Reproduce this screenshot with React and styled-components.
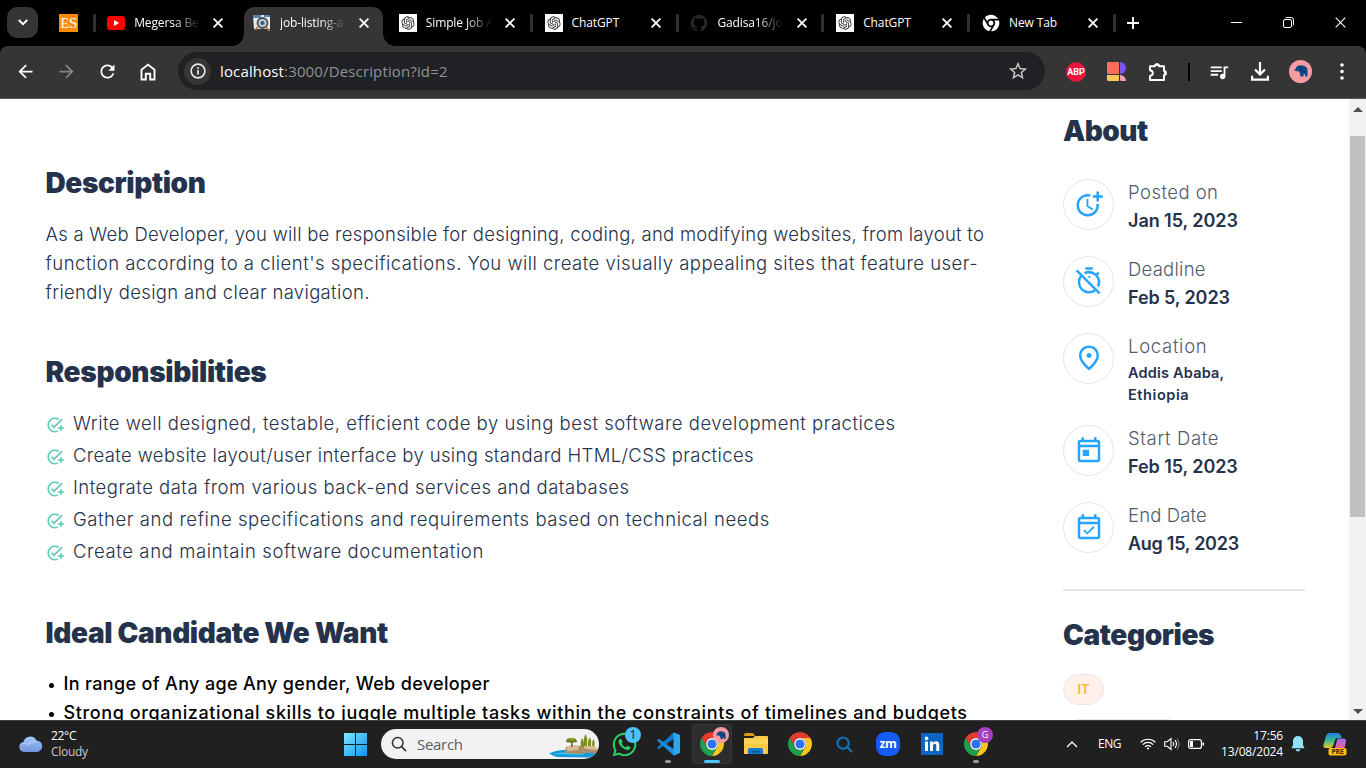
import React from 'react';
import styled, { createGlobalStyle, css } from 'styled-components';
import {
  MdMoreTime, MdOutlineTimerOff, MdOutlinePlace, MdOutlineToday, MdOutlineEventAvailable,
  MdAddTask, MdArrowBack, MdArrowForward, MdRefresh, MdQueueMusic,
  MdStarOutline,
} from 'react-icons/md';
import { RiOpenaiFill, RiGithubFill, RiChromeFill } from 'react-icons/ri';
import { FaWhatsapp } from 'react-icons/fa';

const Global = createGlobalStyle`
  * { box-sizing: border-box; }
  body { margin: 0; overflow: hidden; background: #000; }
  svg { display: block; flex: none; }
`;

const UI_FONT = '"Open Sans", "Noto Sans", sans-serif';
const PAGE_FONT = 'Inter, sans-serif';

const Screen = styled.div`
  width: 1366px;
  height: 768px;
  display: flex;
  flex-direction: column;
  overflow: hidden;
`;

/* ---------- tab strip ---------- */

const TabStrip = styled.div`
  height: 46px;
  flex: none;
  display: flex;
  background: #000;
  font: 12px/18px ${UI_FONT};
  color: #fff;
`;

const TabSearch = styled.div`
  width: 31px;
  height: 31px;
  margin: 7px 0 0 7px;
  border-radius: 10px;
  background: #353535;
  display: flex;
  align-items: center;
  justify-content: center;
`;

const PinnedTab = styled.div`
  width: 19px;
  height: 18px;
  margin: 14px 14px 0 21px;
  background: #ff8a00;
  color: #fff;
  font: 15px/19px "Liberation Serif", serif;
  letter-spacing: -0.5px;
  text-align: center;
`;

const TabSlot = styled.div`
  position: relative;
  width: 145.8px;
  height: 46px;
  display: flex;
  align-items: center;
  padding-left: 15.2px;
  padding-bottom: 1px;
`;

const Divider = styled.span`
  position: absolute;
  left: 0.5px;
  top: 14px;
  width: 3px;
  height: 18px;
  border-radius: 1px;
  background: #303030;
`;

const ActiveShape = styled.span`
  position: absolute;
  left: 6px;
  top: 7px;
  width: 139px;
  height: 39px;
  border-radius: 10px 10px 0 0;
  background: #353535;
  &::before, &::after {
    content: '';
    position: absolute;
    bottom: 0;
    width: 12px;
    height: 12px;
  }
  &::before { left: -12px; background: radial-gradient(circle at 0 0, transparent 11.5px, #353535 12px); }
  &::after { right: -12px; background: radial-gradient(circle at 100% 0, transparent 11.5px, #353535 12px); }
`;

const Favicon = styled.span`
  position: relative;
  width: 18px;
  height: 18px;
  flex: none;
  display: flex;
  align-items: center;
  justify-content: center;
  background: ${(p) => p.$bg || 'transparent'};
  color: ${(p) => p.$fg || '#fff'};
`;

const TabTitle = styled.span`
  position: relative;
  width: 66px;
  margin-left: 9px;
  overflow: hidden;
  white-space: nowrap;
  letter-spacing: -0.12px;
  ${(p) => p.$fade && css`mask-image: linear-gradient(90deg, #000 60%, transparent 100%);`}
`;

const TabClose = styled.span`
  position: relative;
  margin-left: 13.2px;
`;

const NewTab = styled.div`
  position: relative;
  width: 60px;
  height: 45px;
  padding-left: 14px;
  display: flex;
  align-items: center;
`;

const WindowButtons = styled.div`
  margin-left: auto;
  height: 45px;
  display: flex;
`;

const WindowButton = styled.div`
  width: 52px;
  display: flex;
  align-items: center;
  justify-content: center;
`;

/* ---------- toolbar ---------- */

const ToolbarBack = styled.div`
  flex: none;
  background: #000;
`;

const Toolbar = styled.div`
  height: 53px;
  padding: 6px 4px 0 4.5px;
  display: flex;
  align-items: flex-start;
  background: #353535;
  border-radius: 8px 8px 0 0;
  border-bottom: 1px solid #5b5959;
`;

const ToolSlot = styled.div`
  width: ${(p) => p.$w || 41}px;
  height: 39px;
  display: flex;
  align-items: center;
  justify-content: center;
  color: ${(p) => (p.$dim ? '#868686' : '#fff')};
`;

const AddressBar = styled.div`
  width: 867px;
  height: 38px;
  margin: 0 10px 0 9.5px;
  border-radius: 19px;
  background: #202124;
  display: flex;
  align-items: center;
  padding: 0 16px 0 6px;
  color: #c7c7c7;
`;

const SiteInfo = styled.span`
  width: 27px;
  height: 27px;
  border-radius: 50%;
  background: #353535;
  display: flex;
  align-items: center;
  justify-content: center;
`;

const Url = styled.span`
  flex: 1;
  margin-left: 9px;
  font: 15px/22px ${UI_FONT};
  letter-spacing: 0.14px;
  color: #8f9296;
  b { font-weight: 400; color: #fff; }
`;

const Avatar = styled.span`
  width: 23px;
  height: 23px;
  border-radius: 50%;
  background: #f99ba3;
  display: flex;
  align-items: center;
  justify-content: center;
`;

const ToolDivider = styled.span`
  width: 2px;
  height: 18px;
  background: #000;
`;

/* ---------- page ---------- */

const Viewport = styled.div`
  height: 621px;
  flex: none;
  display: flex;
  overflow: hidden;
  background: #fff;
  font-family: ${PAGE_FONT};
  color: #25324b;
`;

const Article = styled.main`
  width: 1018px;
  flex: none;
  padding: 67px 0 0 45.5px;
`;

const Aside = styled.aside`
  width: 242px;
  margin-left: 45px;
  padding-top: 15px;
`;

const Heading = styled.h2`
  margin: 0;
  font-weight: 900;
  font-size: 28px;
  line-height: 34px;
  letter-spacing: ${(p) => p.$track}px;
  white-space: nowrap;
`;

const Line = styled.span`
  display: block;
  white-space: nowrap;
  letter-spacing: ${(p) => p.$track}px;
`;

const Paragraph = styled.p`
  margin: 20px 0 48px;
  font-weight: 300;
  font-size: 18.5px;
  line-height: 29px;
`;

const Checklist = styled.ul`
  list-style: none;
  margin: 18px 0 49px;
  padding: 0;
  font-weight: 300;
  font-size: 18.5px;
`;

const CheckItem = styled.li`
  height: 32px;
  display: flex;
  align-items: center;
  gap: 9.5px;
  svg { color: #56cdad; margin-top: 3px; }
`;

const Bullets = styled.ul`
  list-style: none;
  margin: 19px 0 0;
  padding: 0;
  font-weight: 500;
  font-size: 18px;
  color: #000;
`;

const Bullet = styled.li`
  height: 29px;
  display: flex;
  align-items: center;
  &::before {
    content: '';
    width: 5px;
    height: 5px;
    margin: 3px 10px 0 3px;
    border-radius: 50%;
    background: #000;
  }
`;

const Facts = styled.div`
  margin-top: 30.5px;
  display: flex;
  flex-direction: column;
  gap: 19.2px;
`;

const Fact = styled.div`
  display: flex;
  gap: 14px;
`;

const Round = styled.span`
  width: 51px;
  height: 51px;
  border: 1px solid #e4e5e8;
  border-radius: 50%;
  display: flex;
  align-items: center;
  justify-content: center;
  color: #26a4ff;
`;

const Label = styled.div`
  font-weight: 300;
  font-size: 18.5px;
  line-height: 26px;
  color: #515b6f;
  letter-spacing: ${(p) => p.$track}px;
`;

const Value = styled.div`
  font-weight: 600;
  font-size: 18px;
  line-height: 32px;
  letter-spacing: ${(p) => p.$track}px;
`;

const Address = styled.div`
  padding-top: 3px;
  font-weight: 600;
  font-size: 14.5px;
  line-height: 22px;
`;

const Rule = styled.hr`
  width: 242px;
  height: 2px;
  margin: 28.5px 0 27px;
  border: 0;
  background: #e4e5ea;
`;

const Badge = styled.div`
  width: ${(p) => p.$w}px;
  height: 31px;
  margin-top: ${(p) => p.$top}px;
  border: 1px solid #e5e7eb;
  border-radius: 16px;
  background: ${(p) => p.$bg};
  color: #ffb836;
  font: 600 13px/28px ${PAGE_FONT};
  text-align: center;
`;

const Scrollbar = styled.div`
  width: 17px;
  margin-left: auto;
  background: #f1f1f1;
  display: flex;
  flex-direction: column;
  align-items: center;
`;

const ScrollArrow = styled.span`
  width: 0;
  height: 0;
  border: 5px solid transparent;
  ${(p) => (p.$down
    ? css`border-top-color: #505050; border-bottom: 0; margin: auto 0 6px;`
    : css`border-bottom-color: #505050; border-top: 0; margin: 8px 0 24px;`)}
`;

const ScrollThumb = styled.span`
  width: 15px;
  height: 381px;
  background: #c1c1c1;
`;

/* ---------- taskbar ---------- */

const Taskbar = styled.div`
  height: 48px;
  flex: none;
  display: flex;
  align-items: center;
  padding-bottom: 1px;
  background: #202020;
  border-top: 1px solid #3d4343;
  color: #fff;
  font: 12px/16px ${UI_FONT};
  letter-spacing: -0.3px;
`;

const Weather = styled.div`
  width: 325px;
  padding-left: 19px;
  display: flex;
  align-items: center;
  gap: 8px;
`;

const Dim = styled.div`
  color: #c8c8c8;
`;

const StartButton = styled.div`
  width: 56px;
  padding-left: 19px;
`;

const SearchBox = styled.div`
  width: 218px;
  height: 30px;
  border-radius: 15px;
  background: #f2f2f2;
  display: flex;
  align-items: center;
  padding-left: 10px;
  overflow: hidden;
  color: #5c5c5c;
  font-size: 15px;
`;

const SearchText = styled.span`
  flex: 1;
  margin-left: 10px;
`;

const Apps = styled.div`
  margin-left: 3px;
  display: flex;
`;

const AppSlot = styled.div`
  position: relative;
  width: 40px;
  height: 40px;
  margin: 0 2px;
  border-radius: 4px;
  display: flex;
  align-items: center;
  justify-content: center;
  ${(p) => p.$active && css`background: #2d2d2d; box-shadow: inset 0 0 0 1px #363636;`}
`;

const Running = styled.span`
  position: absolute;
  left: 50%;
  bottom: 1px;
  width: ${(p) => (p.$wide ? 16 : 6)}px;
  height: 3px;
  border-radius: 2px;
  transform: translateX(-50%);
  background: ${(p) => (p.$wide ? '#4cc2ff' : '#9a9a9a')};
`;

const AppBadge = styled.span`
  position: absolute;
  right: 3px;
  top: 3px;
  width: 16px;
  height: 16px;
  border-radius: 50%;
  background: ${(p) => p.$bg};
  color: ${(p) => p.$fg};
  font-size: ${(p) => p.$font || 10}px;
  line-height: 16px;
  display: flex;
  align-items: center;
  justify-content: center;
  letter-spacing: 0;
`;

const Tray = styled.div`
  margin-left: auto;
  padding-right: 19px;
  display: flex;
  align-items: center;
`;

const Language = styled.span`
  width: 24px;
  margin: 0 18px 0 20px;
  letter-spacing: -0.48px;
`;

const StatusIcons = styled.div`
  display: flex;
  align-items: center;
  gap: 8px;
`;

const Clock = styled.div`
  width: 79px;
  text-align: right;
  margin-right: 8px;
  letter-spacing: -0.18px;
`;

const Copilot = styled.div`
  margin-left: 18px;
`;

const Cross = ({ size = 10, w = 1.8 }) => (
  <svg width={size} height={size} viewBox="0 0 10 10" stroke="#fff" strokeWidth={w}><path d="M.6.6l8.8 8.8M9.4.6L.6 9.4" /></svg>
);

const ChromeLogo = () => (
  <svg width="24" height="24" viewBox="-12 -12 24 24">
    <path fill="#e33b2e" d="M-10.39-6A12 12 0 0 1 10.39-6H0A6 6 0 0 0-5.2 3z" />
    <path fill="#fcc61b" d="M10.39-6A12 12 0 0 1 0 12L5.2 3A6 6 0 0 0 0-6z" />
    <path fill="#229f4c" d="M0 12A12 12 0 0 1-10.39-6L-5.2 3A6 6 0 0 0 5.2 3z" />
    <circle r="5.9" fill="#fff" />
    <circle r="4.6" fill="#2d72ee" />
  </svg>
);

const Elephant = ({ size }) => (
  <svg width={size} height={size * 0.86} viewBox="0 0 14 12">
    <path fill="#0c4a86" d="M0 5.200L1.500 4Q2 1.200 4.600.6L7 .3l3.500.7Q13.500 2 13.500 5v6.500h-2.400V9.300H9.600v2.200H6.200V8.600L4.600 6.600 3.600 5.800 2.400 6.600z" />
    <path fill="none" stroke="#082c52" strokeWidth=".8" d="M5 1.500q3 1 2.500 4.500M9 6.500h3" />
  </svg>
);

const YouTubeIcon = () => (
  <svg width="18" height="14" viewBox="0 0 18 14"><rect width="18" height="14" rx="3" fill="#f00" /><path d="M7 4l5 3-5 3z" fill="#fff" /></svg>
);

const JobIcon = () => (
  <svg width="18" height="18" viewBox="0 0 18 18">
    <path fill="#e9edf2" d="M0 1h17v14H1z" />
    <path fill="#5384b8" d="M0 1h8v3H0zM11 1h6v2h-6z" />
    <circle cx="9.500" cy="9" r="5" fill="#b9c7d2" stroke="#514d49" strokeWidth="1.800" />
    <circle cx="9.500" cy="9" r="2" fill="#345e82" />
    <path stroke="#ac7545" strokeWidth="1.800" d="M13 13l3.500 4M4.500 13l-2 3" />
  </svg>
);

const HomeIcon = () => (
  <svg width="16" height="18" viewBox="0 0 16 18" fill="none" stroke="#fff" strokeWidth="1.900"><path d="M1.500 16.500V6.800L8 1.600l6.500 5.200v9.700h-4.300v-5.700H5.800v5.700z" /></svg>
);

const InfoIcon = () => (
  <svg width="16" height="16" viewBox="0 0 16 16" fill="none" stroke="#e8e8e8"><circle cx="8" cy="8" r="6.900" strokeWidth="1.600" /><path strokeWidth="1.700" d="M8 7v4.600M8 4.200v1.700" /></svg>
);

const AbpIcon = () => (
  <svg width="20" height="20" viewBox="0 0 20 20">
    <path fill="#e9163d" d="M6 .5h8L19.500 6v8L14 19.500H6L.5 14V6z" />
    <text x="10" y="13.400" textAnchor="middle" fill="#fff" fontFamily="Roboto" fontWeight="700" fontSize="9">ABP</text>
  </svg>
);

const BlocksIcon = () => (
  <svg width="19" height="19" viewBox="0 0 19 19">
    <rect width="12" height="12" rx="1" fill="#ff6f57" />
    <path fill="#7d55f5" d="M13 0a6 6 0 0 1 0 12z" />
    <path fill="#fdc75a" d="M0 13h12v6H1.500Q0 19 0 17.500z" />
    <path fill="#f8a0b4" d="M13 13a6 6 0 0 1 6 6h-4.500Q13 19 13 17.500z" />
  </svg>
);

const PuzzleIcon = () => (
  <svg width="20" height="20" viewBox="0 0 20 20" fill="none" stroke="#fff" strokeWidth="1.900" strokeLinejoin="round">
    <path d="M2 4.200H6.900A2.100 2.100 0 0 1 11.100 4.200H16V9A2 2 0 0 1 16 13V18H2V14Q4.900 13.400 4.900 11.100T2 8.200z" />
    <path fill="#fff" stroke="none" d="M7 4a2 2.700 0 0 1 4 0zM16 9a2.700 2.200 0 0 1 0 4.200z" />
  </svg>
);

const DownloadIcon = () => (
  <svg width="18" height="19" viewBox="0 0 18 19" fill="none" stroke="#fff" strokeWidth="2.200"><path d="M9 0v12M4 7.500l5 5 5-5M1.100 13.800v3.900h15.800v-3.900" /></svg>
);

const DotsIcon = () => (
  <svg width="4" height="17" viewBox="0 0 4 17" fill="#fff"><circle cx="2" cy="2" r="1.800" /><circle cx="2" cy="8.500" r="1.800" /><circle cx="2" cy="15" r="1.800" /></svg>
);

const CloudIcon = () => (
  <svg width="24" height="16" viewBox="0 0 24 16">
    <defs><linearGradient id="cloud" x2="0" y2="1"><stop stopColor="#a4c8fb" /><stop offset="1" stopColor="#7393df" /></linearGradient></defs>
    <path fill="url(#cloud)" d="M5 16a5 5 0 0 1-.6-9.900A7 7 0 0 1 17.500 4.500 5.800 5.800 0 0 1 18.500 16z" />
    <path fill="none" stroke="#c4dcff" strokeWidth="1.200" opacity=".7" d="M2 8.500q3-3 7 0 4-3.500 8-3" />
  </svg>
);

const WindowsIcon = () => (
  <svg width="23" height="23" viewBox="0 0 23 23">
    <defs><linearGradient id="win" x2="1" y2="1"><stop stopColor="#81e8ff" /><stop offset="1" stopColor="#0a93f5" /></linearGradient></defs>
    <path fill="url(#win)" d="M0 0h11v11H0zM12 0h11v11H12zM0 12h11v11H0zM12 12h11v11H12z" />
  </svg>
);

const Magnifier = ({ size, color, w }) => (
  <svg width={size} height={size} viewBox="0 0 16 16" fill="none" stroke={color} strokeWidth={w} strokeLinecap="round"><circle cx="6.700" cy="6.700" r="5.300" /><path d="M10.600 10.600l4 4" /></svg>
);

const IslandArt = () => (
  <svg width="50" height="30" viewBox="0 0 50 30">
    <path fill="#159bdc" d="M0 24.500Q10 20 22 21l27 1Q48 28 40 28.500L8 28Q4 27 0 24.500z" />
    <path fill="#48c2ef" d="M4 25l16-2.500L36 26z" />
    <path fill="#ae8f6a" d="M17 18l6-1.500 22 .5 5 4-3 3.500-8-1-7 1.500-16-1z" />
    <path fill="#d8bf91" d="M18 17h12l-1 4-11 1zM33 17h13l3 4-12-1z" />
    <path fill="#765b42" d="M22 12h1.500v6H22z" />
    <path fill="#6c7822" d="M17 13q0-4 5-4 6 0 6 4-4 1.500-11 0z" />
    <path fill="#8f9f27" d="M19 10.500q3-3 7-1l-2 2z" />
    <path fill="#7e8d24" d="M32 18q-1-6 1-9 2 3 2 9zM35 17q-1-8 1.500-12Q39 9 38 17zM39 17q-.5-6 2-9 2 4 1 9zM43 17q0-5 1.500-7 2 3 1 7z" />
  </svg>
);

const VsCodeIcon = () => (
  <svg width="24" height="24" viewBox="0 0 24 24">
    <path fill="#0f7cc9" d="M1 15.700l1.600 1.500L18 6.800V.3L6 11z" />
    <path fill="#1b8bdb" d="M1 8.300l1.600-1.500L18 17.200v6.500L6 13z" />
    <path fill="#2aa7f3" d="M17.500.2L24 3v18l-6.500 2.800z" />
  </svg>
);

const FolderIcon = () => (
  <svg width="24" height="22" viewBox="0 0 24 22">
    <path fill="#d99a12" d="M0 2Q0 0 2 0h7l2 3H0z" />
    <path fill="#fccb45" d="M0 5h9l2-2h12q1 0 1 1v16q0 1-1 1H0z" />
    <path fill="#ffdc6b" d="M0 6h24v5H0z" opacity=".5" />
    <path fill="#1379c8" d="M4 21v-4q0-2 2-2h11q2 0 2 2v4z" />
    <path fill="#0a5694" d="M8 18h8v1.500H8z" />
  </svg>
);

const ZoomIcon = () => (
  <svg width="24" height="24" viewBox="0 0 24 24">
    <rect width="24" height="24" rx="9" fill="#145cf5" />
    <text x="12" y="15.500" textAnchor="middle" fill="#fff" fontFamily="Open Sans" fontWeight="700" fontSize="12">zm</text>
  </svg>
);

const LinkedInIcon = () => (
  <svg width="22" height="22" viewBox="0 0 22 22">
    <rect width="22" height="22" rx="1" fill="#0a66c2" />
    <path fill="#fff" d="M4 8.500h3V18H4zM9 8.500h2.900v1.400Q12.900 8.200 15 8.200q3.300 0 3.300 4V18h-3v-5.300q0-2-1.500-2-1.800 0-1.800 2.200V18H9z" />
    <circle cx="5.500" cy="5.400" r="1.800" fill="#fff" />
  </svg>
);

const WifiIcon = () => (
  <svg width="16" height="12" viewBox="0 0 16 12" fill="none" stroke="#fff" strokeWidth="1.200"><path d="M.6 4.300a10.500 10.500 0 0 1 14.800 0M2.800 6.600a7.300 7.300 0 0 1 10.400 0M5 8.800a4.200 4.200 0 0 1 6 0" /><circle cx="8" cy="10.500" r="1" fill="#fff" stroke="none" /></svg>
);

const SpeakerIcon = () => (
  <svg width="16" height="14" viewBox="0 0 16 14" fill="none" stroke="#fff" strokeWidth="1.100"><path d="M.7 4.700h2.600L7 1.500v11L3.300 9.300H.7zM9 5q1.500 2 0 4M11 3.200q3 3.800 0 7.600" /><path stroke="#777" d="M13 1.500q4 5.500 0 11" /></svg>
);

const BatteryIcon = () => (
  <svg width="16" height="10" viewBox="0 0 16 10" fill="none" stroke="#fff" strokeWidth="1.200"><rect x=".6" y=".6" width="12.800" height="8.800" rx="2" /><path fill="#fff" stroke="none" d="M2 2h3v6H2zM14.400 3.500H16v3h-1.600z" /></svg>
);

const BellIcon = () => (
  <svg width="14" height="16" viewBox="0 0 14 16" fill="#8fe3ff"><path d="M7 0a5 5 0 0 1 5 5v4l1.500 3.300H.5L2 9V5a5 5 0 0 1 5-5zM4.800 13.300h4.400a2.200 2.200 0 0 1-4.400 0z" /></svg>
);

const CopilotIcon = () => (
  <svg width="24" height="24" viewBox="0 0 24 24">
    <defs>
      <linearGradient id="cpa" x2="0" y2="1"><stop stopColor="#1b80e8" /><stop offset=".5" stopColor="#39b98e" /><stop offset="1" stopColor="#f2c52b" /></linearGradient>
      <linearGradient id="cpb" x2="0" y2="1"><stop stopColor="#9b6cf0" /><stop offset="1" stopColor="#f0608f" /></linearGradient>
    </defs>
    <path fill="url(#cpa)" d="M6 1h9q2 0 2.600 2l1 3h-4q-2 0-2.600 2l-2 6q-.6 2-3 2H3q-3 0-2.600-3L3 4Q4 1 6 1z" />
    <path fill="url(#cpb)" d="M15 6.500h5q3.500 0 3 3L21.800 15q-.6 2-3 2h-7l2-8q.6-2.500 1.200-2.500z" />
    <rect x="5.500" y="16" width="18" height="7.500" rx="2" fill="#fcc212" />
    <text x="14.500" y="22.300" textAnchor="middle" fill="#3a2b00" fontFamily="Open Sans" fontWeight="700" fontSize="7">PRE</text>
  </svg>
);

const openai = <Favicon $bg="#fff" $fg="#2e2e2e"><RiOpenaiFill size={16} /></Favicon>;

const tabs = [
  { title: 'Megersa Be', fade: true, divider: true, icon: <Favicon><YouTubeIcon /></Favicon> },
  { title: 'job-listing-a', fade: true, active: true, icon: <Favicon><JobIcon /></Favicon> },
  { title: 'Simple Job A', fade: true, icon: openai },
  { title: 'ChatGPT', divider: true, icon: openai },
  { title: 'Gadisa16/jo', fade: true, divider: true, icon: <Favicon $fg="#24292e"><RiGithubFill size={20} /></Favicon> },
  { title: 'ChatGPT', divider: true, icon: openai },
  { title: 'New Tab', divider: true, icon: <Favicon><RiChromeFill size={20} /></Favicon> },
];

const description = [
  ['As a Web Developer, you will be responsible for designing, coding, and modifying websites, from layout to', 0.26],
  ["function according to a client's specifications. You will create visually appealing sites that feature user-", 0.48],
  ['friendly design and clear navigation.', 0.34],
];

const duties = [
  ['Write well designed, testable, efficient code by using best software development practices', 0.52],
  ['Create website layout/user interface by using standard HTML/CSS practices', 0.37],
  ['Integrate data from various back-end services and databases', 0.5],
  ['Gather and refine specifications and requirements based on technical needs', 0.56],
  ['Create and maintain software documentation', 0.6],
];

const ideal = [
  ['In range of Any age Any gender, Web developer', 0.34],
  ['Strong organizational skills to juggle multiple tasks within the constraints of timelines and budgets', 0.62],
];

const facts = [
  { Icon: MdMoreTime, label: 'Posted on', lt: 0.46, value: 'Jan 15, 2023', vt: -0.05 },
  { Icon: MdOutlineTimerOff, label: 'Deadline', lt: 0.25, value: 'Feb 5, 2023', vt: -0.1 },
  { Icon: MdOutlinePlace, label: 'Location', lt: 0.7, address: [['Addis Ababa,', 0.2], ['Ethiopia', 0.58]] },
  { Icon: MdOutlineToday, label: 'Start Date', lt: 0.64, value: 'Feb 15, 2023', vt: -0.07 },
  { Icon: MdOutlineEventAvailable, label: 'End Date', lt: 0.15, value: 'Aug 15, 2023', vt: -0.27 },
];

export default function App() {
  return (
    <Screen>
      <Global />
      <TabStrip>
        <TabSearch>
          <svg width="10" height="7" viewBox="0 0 10 7" fill="none" stroke="#fff" strokeWidth="2"><path d="M.8 1l4.200 4.200L9.200 1" /></svg>
        </TabSearch>
        <PinnedTab>ES</PinnedTab>
        {tabs.map((t, i) => (
          <TabSlot key={i}>
            {t.active && <ActiveShape />}
            {t.divider && <Divider />}
            {t.icon}
            <TabTitle $fade={t.fade}>{t.title}</TabTitle>
            <TabClose><Cross /></TabClose>
          </TabSlot>
        ))}
        <NewTab>
          <Divider />
          <svg width="12" height="12" viewBox="0 0 12 12" stroke="#fff" strokeWidth="1.900"><path d="M6 0v12M0 6h12" /></svg>
        </NewTab>
        <WindowButtons>
          <WindowButton><svg width="11" height="11" viewBox="0 0 11 11" stroke="#fff"><path d="M0 5.500h11" /></svg></WindowButton>
          <WindowButton>
            <svg width="11" height="11" viewBox="0 0 11 11" fill="none" stroke="#fff"><rect x=".5" y="2.500" width="8" height="8" rx="1.500" /><path d="M2.500 .9Q3 .5 4 .5h4q2.500 0 2.500 2.500v4q0 1-.5 1.500" /></svg>
          </WindowButton>
          <WindowButton><Cross size={11} w={1} /></WindowButton>
        </WindowButtons>
      </TabStrip>

      <ToolbarBack>
        <Toolbar>
          <ToolSlot><MdArrowBack size={21} /></ToolSlot>
          <ToolSlot $dim><MdArrowForward size={21} /></ToolSlot>
          <ToolSlot><MdRefresh size={21} /></ToolSlot>
          <ToolSlot><HomeIcon /></ToolSlot>
          <AddressBar>
            <SiteInfo><InfoIcon /></SiteInfo>
            <Url><b>localhost</b>:3000/Description?id=2</Url>
            <MdStarOutline size={22} />
          </AddressBar>
          <ToolSlot><AbpIcon /></ToolSlot>
          <ToolSlot><BlocksIcon /></ToolSlot>
          <ToolSlot $w={42}><PuzzleIcon /></ToolSlot>
          <ToolSlot $w={19}><ToolDivider /></ToolSlot>
          <ToolSlot><MdQueueMusic size={22} /></ToolSlot>
          <ToolSlot><DownloadIcon /></ToolSlot>
          <ToolSlot><Avatar><Elephant size={14} /></Avatar></ToolSlot>
          <ToolSlot><DotsIcon /></ToolSlot>
        </Toolbar>
      </ToolbarBack>

      <Viewport>
        <Article>
          <Heading $track={-0.38}>Description</Heading>
          <Paragraph>
            {description.map(([t, k]) => <Line key={t} $track={k}>{t}</Line>)}
          </Paragraph>
          <Heading $track={-0.33}>Responsibilities</Heading>
          <Checklist>
            {duties.map(([t, k]) => (
              <CheckItem key={t}><MdAddTask size={18} /><Line $track={k}>{t}</Line></CheckItem>
            ))}
          </Checklist>
          <Heading $track={-0.36}>Ideal Candidate We Want</Heading>
          <Bullets>
            {ideal.map(([t, k]) => <Bullet key={t}><Line $track={k}>{t}</Line></Bullet>)}
          </Bullets>
        </Article>
        <Aside>
          <Heading $track={-0.5}>About</Heading>
          <Facts>
            {facts.map(({ Icon, label, lt, value, vt, address }) => (
              <Fact key={label}>
                <Round><Icon size={30} /></Round>
                <div>
                  <Label $track={lt}>{label}</Label>
                  {value && <Value $track={vt}>{value}</Value>}
                  {address && (
                    <Address>{address.map(([t, k]) => <Line key={t} $track={k}>{t}</Line>)}</Address>
                  )}
                </div>
              </Fact>
            ))}
          </Facts>
          <Rule />
          <Heading $track={-0.4}>Categories</Heading>
          <Badge $w={41} $top={22.5} $bg="#fef1e9">IT</Badge>
          <Badge $w={120} $top={14} $bg="#fff" />
        </Aside>
        <Scrollbar>
          <ScrollArrow />
          <ScrollThumb />
          <ScrollArrow $down />
        </Scrollbar>
      </Viewport>

      <Taskbar>
        <Weather>
          <CloudIcon />
          <div><div>22°C</div><Dim>Cloudy</Dim></div>
        </Weather>
        <StartButton><WindowsIcon /></StartButton>
        <SearchBox>
          <Magnifier size={16} color="#303030" w={1.5} />
          <SearchText>Search</SearchText>
          <IslandArt />
        </SearchBox>
        <Apps>
          <AppSlot><FaWhatsapp size={27} color="#25d366" /><AppBadge $bg="#4cc2ff" $fg="#10222c" $font={12}>1</AppBadge></AppSlot>
          <AppSlot><VsCodeIcon /><Running /></AppSlot>
          <AppSlot $active><ChromeLogo /><AppBadge $bg="#f99ba3"><Elephant size={10} /></AppBadge><Running $wide /></AppSlot>
          <AppSlot><FolderIcon /></AppSlot>
          <AppSlot><ChromeLogo /></AppSlot>
          <AppSlot><Magnifier size={17} color="#1272b8" w={2} /></AppSlot>
          <AppSlot><ZoomIcon /></AppSlot>
          <AppSlot><LinkedInIcon /></AppSlot>
          <AppSlot><ChromeLogo /><AppBadge $bg="#a83fbd" $fg="#fff" $font={9}>G</AppBadge><Running /></AppSlot>
        </Apps>
        <Tray>
          <svg width="12" height="7" viewBox="0 0 12 7" fill="none" stroke="#fff" strokeWidth="1.400"><path d="M1 6l5-5 5 5" /></svg>
          <Language>ENG</Language>
          <StatusIcons><WifiIcon /><SpeakerIcon /><BatteryIcon /></StatusIcons>
          <Clock><div>17:56</div><div>13/08/2024</div></Clock>
          <BellIcon />
          <Copilot><CopilotIcon /></Copilot>
        </Tray>
      </Taskbar>
    </Screen>
  );
}
